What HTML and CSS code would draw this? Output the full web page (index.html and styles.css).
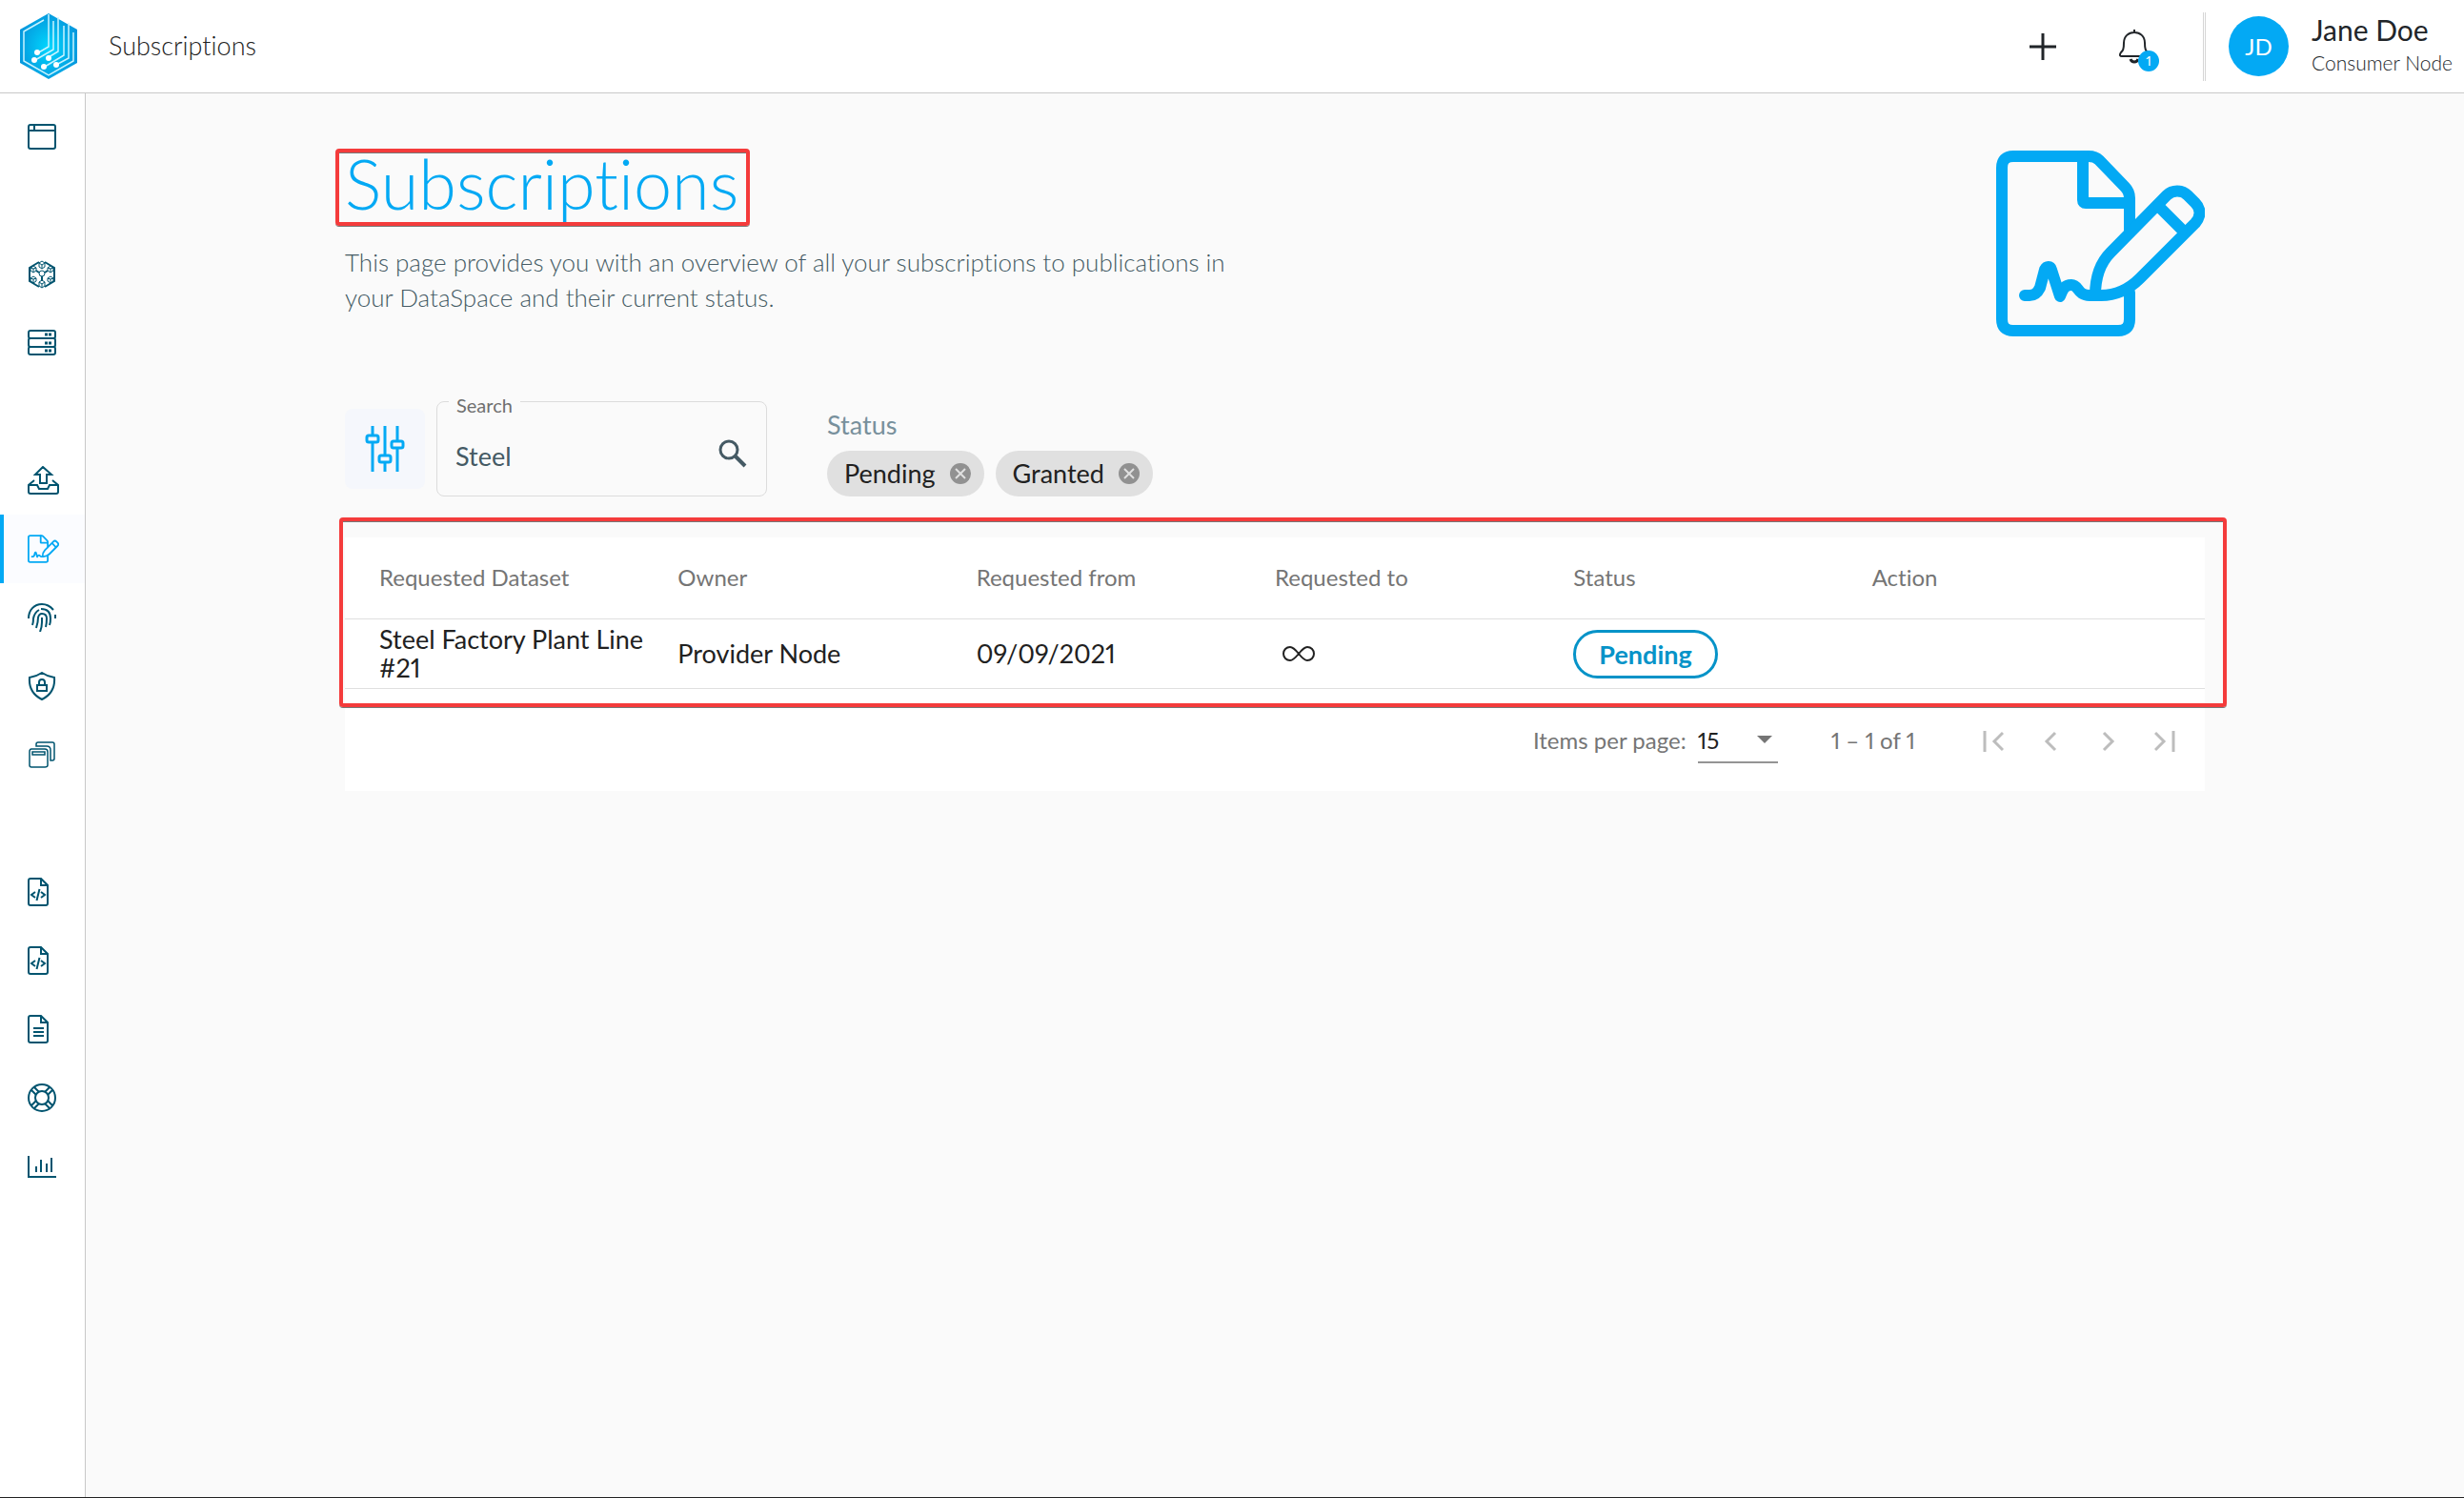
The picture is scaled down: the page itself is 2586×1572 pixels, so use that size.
FILE: index.html
```html
<!DOCTYPE html>
<html lang="en">
<head>
<meta charset="utf-8">
<meta name="viewport" content="width=device-width, initial-scale=1">
<title>Subscriptions</title>
<link rel="stylesheet" href="styles.css">
</head>
<body>
<svg class="defs" aria-hidden="true">
  <symbol id="sign" viewBox="0 0 219 195">
    <path d="M140 86V50C140 45 138 41 135 38L108 10Q104 6 97 6H18Q6 6 6 18V177Q6 189 18 189H128Q140 189 140 177V149"/>
    <path d="M91 6V52Q91 55 94 55H139"/>
    <path d="M104 152C104 134 108 119 120 107L179 47C185 41 195 41 201 47L209 55C215 61 215 69 209 76L151 134C140 145 127 152 110 152H98C85 152 87 141 79 141C72 141 70 145 67 153L58 125C57 121 53 121 51 125L46 144C43 150 40 152 35 152H30"/>
    <path d="M171 59L195 83"/>
  </symbol>
  <symbol id="code-file" viewBox="0 0 30 30">
    <path d="M3 1H14L21 8V27Q21 29 19 29H3Q1 29 1 27V3Q1 1 3 1ZM14 1V8H21"/>
    <path stroke-width="2" d="M8 15L4 18L8 21M14 15L18 18L14 21M12.500 12L9.500 24"/>
  </symbol>
</svg>

<header class="topbar">
  <a class="logo" href="#" aria-label="Home">
    <svg width="60" height="70" viewBox="0 0 60 70">
      <defs>
        <radialGradient id="glow" cx="50%" cy="52%" r="55%"><stop offset="0" stop-color="#00d8ff"/><stop offset="1" stop-color="#0596dc"/></radialGradient>
      </defs>
      <path fill="url(#glow)" d="M30 0L60 17V52L30 69L0 52V17Z"/>
      <g fill="none" stroke="#c9f3ff" stroke-width="1.500">
        <path d="M25 7L4 19V50L30 65L56 50V20"/>
        <path d="M30 1V35L18 42M35 8V38L16 49M40 4V40L30 46M46 13V44L26 56M51 10V47L38 54"/>
      </g>
      <g fill="#fff"><circle cx="18" cy="41" r="3"/><circle cx="15" cy="49" r="3"/><circle cx="30" cy="47" r="3"/><circle cx="25" cy="56" r="3"/><circle cx="38" cy="54" r="3"/></g>
    </svg>
  </a>
  <span class="crumb">Subscriptions</span>
  <div class="tools">
    <button class="icon-btn" aria-label="Add">
      <svg width="28" height="28" viewBox="0 0 28 28"><path fill="none" stroke="#212529" stroke-width="3" d="M14 0V28M0 14H28"/></svg>
    </button>
    <button class="icon-btn bell" aria-label="Notifications">
      <svg width="32" height="36" viewBox="0 0 32 36"><g fill="none" stroke="#212529" stroke-width="2"><path d="M16 3C10 3 5 7 5 14C5 21 4 22 2 24C0 27 1 28 3 28H29C31 28 32 27 30 24C28 22 27 21 27 14C27 7 22 3 16 3ZM16 0V3"/><path stroke-width="3" d="M12 31Q13 34 16 34Q19 34 20 31"/></g></svg>
      <span class="badge">1</span>
    </button>
    <div class="user">
      <span class="avatar">JD</span>
      <div class="user-text"><div class="user-name">Jane Doe</div><div class="user-org">Consumer Node</div></div>
    </div>
  </div>
</header>

<div class="shell">
  <nav class="sidebar" aria-label="Main">
    <a href="#" aria-label="Dashboard"><svg class="ico" viewBox="0 0 30 30"><path d="M3 2H27Q29 2 29 4V25Q29 27 27 27H3Q1 27 1 25V4Q1 2 3 2ZM1 8H29M7 2V8"/></svg></a>
    <a class="group" href="#" aria-label="Network"><svg class="ico fine" viewBox="0 0 30 30">
      <path stroke-width="2" d="M12 2L2 8V22L12 28M18 28L28 22V8L18 2M15 17V22M12 13L9 11M18 13L21 11"/><circle cx="15" cy="14" r="3"/>
      <path d="M15 1L18 3V7L15 9L12 7V3ZM12 3L15 5L18 3M15 5V9M6 6L9 8V11L6 13L3 11V8ZM3 8L6 9L9 8M6 9V13M24 6L27 8V11L24 13L21 11V8ZM21 8L24 9L27 8M24 9V13M15 21L18 23V27L15 29L12 27V23ZM12 23L15 25L18 23M15 25V29M6 17L9 19V22L6 24L3 22V19ZM3 19L6 20L9 19M6 20V24M24 17L27 19V22L24 24L21 22V19ZM21 19L24 20L27 19M24 20V24"/></svg></a>
    <a href="#" aria-label="Servers"><svg class="ico" viewBox="0 0 30 30"><rect x="1" y="2" width="28" height="8" rx="2"/><rect x="1" y="10" width="28" height="9" rx="2"/><rect x="1" y="19" width="28" height="8" rx="2"/><path stroke-width="3" d="M18 6H21M22 6H25M18 15H21M22 15H25M18 23H21M22 23H25"/></svg></a>
    <a class="group" href="#" aria-label="Publish"><svg class="ico wide" viewBox="0 0 33 30"><path d="M16 1L25 9H20V18H13V9H8ZM7 15L1 20V27Q1 29 3 29H30Q32 29 32 27V20L26 15M1 20H10L12 24H21L23 20H32"/></svg></a>
    <a class="active" href="#" aria-label="Subscriptions" aria-current="page"><svg class="ico wide sign"><use href="#sign"/></svg></a>
    <a href="#" aria-label="Identity"><svg class="ico" viewBox="0 0 30 30"><path d="M1 16C1 7 7 1 15 1Q22 1 27 7M29 12V16M5 23Q6 20 6 16Q7 10 12 7M14 6Q24 6 24 16Q24 20 23 23M9 26Q11 20 11 15Q12 11 15 11Q20 11 20 16Q20 21 19 25M15 15V20Q15 25 13 30"/></svg></a>
    <a href="#" aria-label="Security"><svg class="ico" viewBox="0 0 30 30"><path d="M15 1Q21 5 28 6C29 18 23 25 15 29C7 25 1 18 2 6Q9 5 15 1ZM10 14H20V20H10ZM12 14V11Q12 8 15 8Q18 8 18 11V14"/></svg></a>
    <a href="#" aria-label="Collections"><svg class="ico fine" viewBox="0 0 30 30"><path stroke-width="1.500" d="M4 9H18Q21 9 21 12V26Q21 28 18 28H4Q2 28 2 26V12Q2 9 4 9ZM5 12H18V15H5ZM9 6V4Q9 2 11 2H26Q28 2 28 4V19Q28 21 26 21H24V10Q24 6 20 6Z"/></svg></a>
    <a class="group" href="#" aria-label="Schemas"><svg class="ico"><use href="#code-file"/></svg></a>
    <a href="#" aria-label="API"><svg class="ico"><use href="#code-file"/></svg></a>
    <a href="#" aria-label="Documentation"><svg class="ico" viewBox="0 0 30 30"><path d="M3 1H14L21 8V27Q21 29 19 29H3Q1 29 1 27V3Q1 1 3 1ZM14 1V8H21M6 14H17M6 18H17M6 22H17"/></svg></a>
    <a href="#" aria-label="Support"><svg class="ico" viewBox="0 0 30 30"><circle cx="15" cy="15" r="14"/><circle cx="15" cy="15" r="7"/><path d="M4 7L9 12M7 4L12 9M26 7L21 12M23 4L18 9M4 23L9 18M7 26L12 21M26 23L21 18M23 26L18 21"/></svg></a>
    <a href="#" aria-label="Statistics"><svg class="ico" viewBox="0 0 30 30"><path d="M1 4V26H30M9 15V21M14 8V21M20 12V21M25 6V21"/></svg></a>
  </nav>

  <main class="page">
    <section class="intro">
      <div>
        <h1 class="title">Subscriptions<span class="mark mark-title"></span></h1>
        <p class="lead">This page provides you with an overview of all your subscriptions to publications in your DataSpace and their current status.</p>
      </div>
      <svg class="hero sign" aria-hidden="true"><use href="#sign"/></svg>
    </section>

    <section class="filters">
      <button class="tune" aria-label="Filters">
        <svg width="44" height="48" viewBox="0 0 44 48"><g fill="none" stroke="#03a9f4" stroke-width="3"><path d="M9 0V9M9 17V48M22 0V30M22 38V48M35 0V15M35 23V48"/><rect x="3" y="10" width="12" height="7" rx="2"/><rect x="16" y="31" width="12" height="7" rx="2"/><rect x="29" y="16" width="12" height="7" rx="2"/></g></svg>
      </button>
      <div class="field">
        <label for="search">Search</label>
        <input id="search" type="text" value="Steel">
        <svg width="30" height="30" viewBox="0 0 30 30" aria-hidden="true"><g fill="none" stroke="#455a64" stroke-width="3"><circle cx="11" cy="11" r="9"/><path stroke-width="4" d="M18 18L28 28"/></g></svg>
      </div>
      <div class="status">
        <span class="status-label">Status</span>
        <div class="chips">
          <span class="chip">Pending<button aria-label="Remove Pending"><svg width="22" height="22" viewBox="0 0 22 22"><path stroke="#e0e0e0" stroke-width="2" d="M6 6L16 16M16 6L6 16"/></svg></button></span>
          <span class="chip">Granted<button aria-label="Remove Granted"><svg width="22" height="22" viewBox="0 0 22 22"><path stroke="#e0e0e0" stroke-width="2" d="M6 6L16 16M16 6L6 16"/></svg></button></span>
        </div>
      </div>
    </section>

    <section class="card">
      <span class="mark mark-table"></span>
      <table>
        <thead><tr><th>Requested Dataset</th><th>Owner</th><th>Requested from</th><th>Requested to</th><th>Status</th><th>Action</th></tr></thead>
        <tbody><tr><td>Steel Factory Plant Line #21</td><td>Provider Node</td><td>09/09/2021</td><td><svg class="forever" role="img" aria-label="No end date" viewBox="0 0 36 18"><path d="M18 9C14 4 12 2 9 2C5 2 2 5 2 9C2 13 5 16 9 16C12 16 14 14 18 9C22 4 24 2 27 2C31 2 34 5 34 9C34 13 31 16 27 16C24 16 22 14 18 9Z"/></svg></td><td><span class="pill">Pending</span></td><td></td></tr></tbody>
      </table>
      <div class="pager">
        <label for="size">Items per page:</label>
        <div class="select"><select id="size"><option>15</option><option>30</option></select></div>
        <span class="range">1 – 1 of 1</span>
        <div class="pages">
          <button aria-label="First page" disabled><svg viewBox="0 0 22 22"><path d="M2 0V22M21 2L12 11L21 20"/></svg></button>
          <button aria-label="Previous page" disabled><svg viewBox="0 0 22 22"><path d="M16 2L7 11L16 20"/></svg></button>
          <button aria-label="Next page" disabled><svg viewBox="0 0 22 22"><path d="M7 2L16 11L7 20"/></svg></button>
          <button aria-label="Last page" disabled><svg viewBox="0 0 22 22"><path d="M1 2L10 11L1 20M20 0V22"/></svg></button>
        </div>
      </div>
    </section>
  </main>
</div>
</body>
</html>
```
FILE: styles.css
```css
* { box-sizing: border-box; }
body {
  margin: 0;
  min-height: 100vh;
  display: flex;
  flex-direction: column;
  font-family: Lato, "Liberation Sans", sans-serif;
  font-size: 27px;
  font-variant-ligatures: none;
  font-variant-numeric: proportional-nums;
  line-height: 30px;
  color: #212121;
  background: #fafafa;
  border-bottom: 1px solid #222;
}
.defs { display: none; }
button {
  padding: 0;
  border: 0;
  background: none;
  font: inherit;
  display: grid;
  place-items: center;
}
svg { display: block; }

.topbar {
  display: flex;
  align-items: center;
  height: 98px;
  padding: 0 12px 0 21px;
  background: #fff;
  border-bottom: 1px solid #c8c8c8;
}
.crumb { margin-left: 33px; padding-bottom: 2px; font-weight: 300; }
.tools { display: flex; align-items: center; margin-left: auto; }
.bell { position: relative; margin-left: 66px; }
.badge {
  position: absolute;
  left: 20px;
  top: 22px;
  width: 22px;
  border-radius: 11px;
  background: #03a9f4;
  color: #fff;
  font-size: 14px;
  line-height: 22px;
  text-align: center;
}
.user {
  display: flex;
  align-items: center;
  gap: 24px;
  height: 72px;
  margin-left: 56px;
  padding-left: 24px;
  border-left: 3px double #d6d6d6;
}
.avatar {
  width: 63px;
  border-radius: 50%;
  background: #03a9f4;
  color: #fff;
  font-size: 24px;
  line-height: 63px;
  text-align: center;
}
.user-text { padding-bottom: 2px; }
.user-name { font-size: 30px; line-height: 36px; color: #212529; }
.user-org { font-size: 21px; line-height: 34px; font-weight: 300; color: #212529; }

.shell { flex: 1; display: flex; }
.sidebar {
  width: 90px;
  flex: none;
  padding-top: 10px;
  background: #fff;
  border-right: 1px solid #c8c8c8;
}
.sidebar a {
  display: flex;
  align-items: center;
  height: 72px;
  padding-left: 25px;
  border-left: 4px solid transparent;
  color: #00546f;
}
.sidebar .group { margin-top: 72px; }
.sidebar .active { background: #fbfcff; border-color: #03a9f4; color: #03a9f4; }
.ico { width: 30px; height: 30px; fill: none; stroke: currentColor; stroke-width: 2; }
.fine { stroke-width: 1; }
.wide { width: 33px; }
.sign {
  fill: none;
  stroke: #03a9f4;
  stroke-width: 12;
  stroke-linecap: round;
  stroke-linejoin: round;
}

.page {
  flex: 1;
  width: 100%;
  max-width: 1952px;
  margin: 0 auto;
  padding-top: 60px;
}
.intro { display: flex; justify-content: space-between; align-items: flex-start; }
.hero { width: 219px; height: 195px; }
.title {
  position: relative;
  width: max-content;
  margin: 0;
  font-size: 72px;
  line-height: 68px;
  font-weight: 300;
  color: #03a9f4;
}
.lead {
  max-width: 960px;
  margin: 31px 0 0;
  font-size: 26px;
  line-height: 37px;
  font-weight: 300;
  color: #455a64;
}
.mark {
  position: absolute;
  border: 4px solid #f43b3b;
  border-radius: 4px;
  box-shadow: 0 1px 0 #777, inset 0 1px 0 #777;
  pointer-events: none;
}
.mark-title { inset: -2px -12px -11px -10px; }
.mark-table { inset: -21px -23px 88px -6px; }

.filters { display: flex; align-items: flex-end; margin-top: 68px; }
.tune { width: 84px; height: 84px; margin-bottom: 8px; border-radius: 8px; background: #f5f7fc; }
.field {
  position: relative;
  display: flex;
  align-items: center;
  width: 347px;
  height: 100px;
  margin-left: 12px;
  padding: 10px 20px 0 19px;
  border: 1px solid #dcdcdc;
  border-radius: 8px;
}
.field label {
  position: absolute;
  left: 12px;
  top: -12px;
  padding: 0 8px;
  background: #fafafa;
  font-size: 20px;
  line-height: 30px;
  color: #6f6f6f;
}
.field input {
  flex: 1;
  min-width: 0;
  padding: 6px 0 0;
  border: 0;
  outline: 0;
  background: none;
  font: inherit;
  color: #455a64;
}
.status { margin-left: 63px; }
.status-label { display: block; margin-bottom: 12px; color: #78909c; }
.chips { display: flex; gap: 12px; }
.chip {
  display: flex;
  align-items: center;
  gap: 15px;
  height: 48px;
  padding: 0 14px 0 18px;
  border-radius: 24px;
  background: #e0e0e0;
}
.chip button { border-radius: 50%; background: #919191; }

.card { position: relative; margin-top: 43px; background: #fff; }
table, thead, tbody { display: block; }
tr {
  display: grid;
  grid-template-columns: repeat(6, 1fr);
  align-items: center;
  padding: 0 36px;
  border-bottom: 1px solid #e0e0e0;
}
thead tr { height: 86px; }
tbody tr { min-height: 73px; }
th { padding: 0 0 2px; text-align: left; font-size: 24px; font-weight: 400; color: #757575; }
td { padding: 0; }
.forever {
  width: 36px;
  height: 18px;
  margin-left: 7px;
  fill: none;
  stroke: #212121;
  stroke-width: 2;
}
.pill {
  display: block;
  width: max-content;
  padding: 0 24px;
  border: 3px solid #0693c8;
  border-radius: 26px;
  line-height: 45px;
  font-weight: 700;
  color: #0693c8;
}
.pager {
  display: flex;
  align-items: center;
  justify-content: flex-end;
  height: 107px;
  padding-right: 12px;
  font-size: 24px;
  color: #757575;
}
.select {
  position: relative;
  width: 84px;
  margin: 9px 56px 0 12px;
  padding-bottom: 7px;
  border-bottom: 2px solid #949494;
}
.select::after {
  content: "";
  position: absolute;
  right: 6px;
  top: 10px;
  border: 8px solid transparent;
  border-top-color: #757575;
  border-bottom: 0;
}
select {
  display: block;
  width: 100%;
  padding: 0;
  border: 0;
  appearance: none;
  background: none;
  font: inherit;
  color: #212121;
}
.pages { display: flex; margin: 3px 0 0 52px; }
.pages button { width: 60px; height: 60px; }
.pages svg { width: 22px; fill: none; stroke: #bdbdbd; stroke-width: 3; }
```
